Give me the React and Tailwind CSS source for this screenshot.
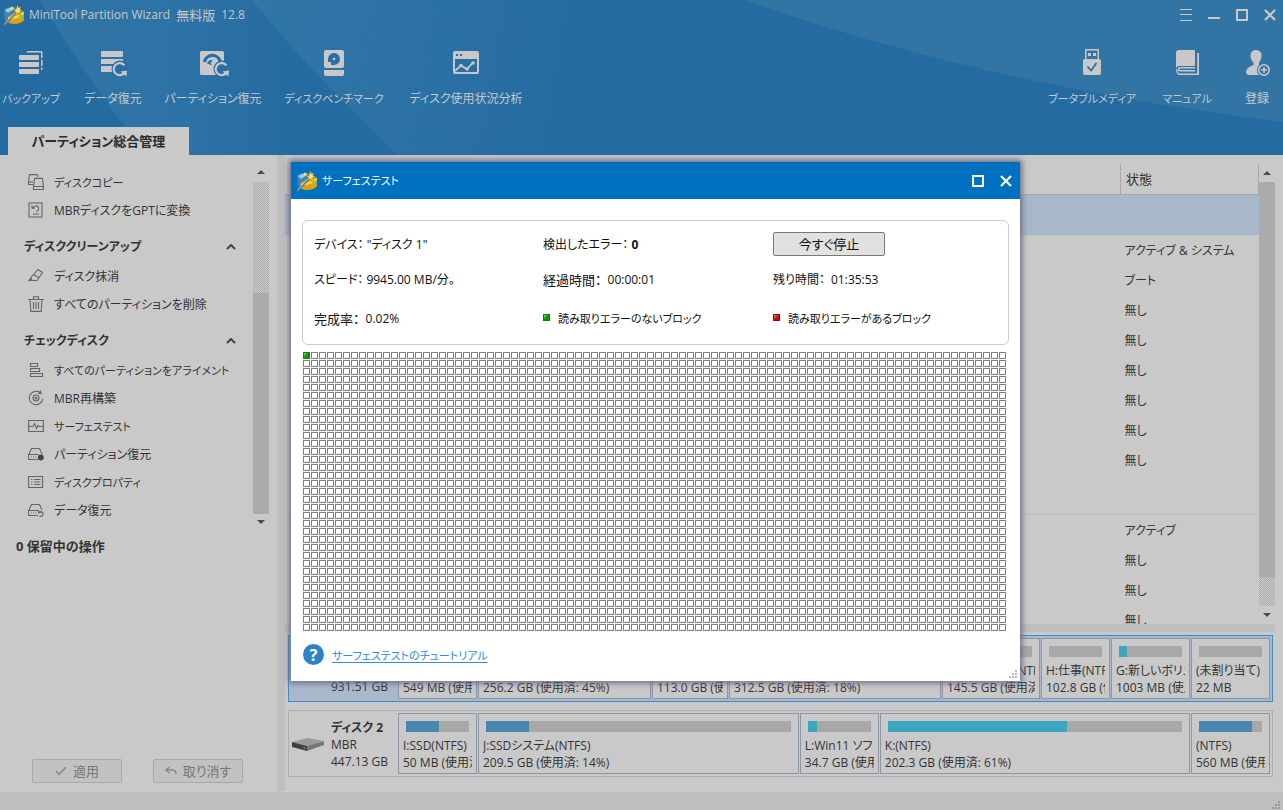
import clsx from 'clsx';

/* ---------- toolbar icons ---------- */

const ToolIcon = ({ className, children }) => (
  <svg width="30" height="30" viewBox="0 0 30 30" fill="#c8c8c8" className={clsx('overflow-visible', className)} aria-hidden="true">{children}</svg>
);

const Reload = () => (
  <>
    <circle cx="20" cy="20" r="8.5" fill="#2a6ea4"/>
    <path d="M24.4 16.4A6 6 0 1 0 24.4 23.8" fill="none" stroke="#c8c8c8" strokeWidth="2.2"/>
    <path d="M20.6 22.4l6.4-.8-.6 6z"/>
  </>
);

const BackupIcon = () => (
  <ToolIcon>
    <path d="M10.500 4.500Q10.500 3 12 3h13q1.500 0 1.500 1.500V10H25V4.500z"/>
    <path d="M25 11.500h1.500V18H25zM25 19.500h1.500V22H25z"/>
    <rect x="3" y="7" width="20" height="5" rx="1"/>
    <rect x="3" y="14" width="20" height="5"/>
    <rect x="3" y="21" width="20" height="5" rx="1"/>
  </ToolIcon>
);

const DataIcon = () => (
  <ToolIcon>
    <rect x="3" y="3" width="22" height="6" rx="1"/>
    <rect x="3" y="11" width="22" height="5"/>
    <rect x="3" y="18" width="15" height="6" rx="1"/>
    <g transform="translate(2 1)"><Reload/></g>
  </ToolIcon>
);

const PartitionIcon = () => (
  <ToolIcon>
    <rect x="2" y="3" width="24" height="24" rx="1.500"/>
    <path d="M6.500 14a8 8 0 0 1 15.500-1" fill="none" stroke="#2a6ea4" strokeWidth="3.200"/>
    <path d="M9 15.500a5 5 0 0 1 5-3.500l2 3-3 2z" fill="#2a6ea4"/>
    <circle cx="14.500" cy="15" r="1.800"/>
    <g transform="translate(4 1)"><Reload/></g>
  </ToolIcon>
);

const BenchIcon = () => (
  <ToolIcon>
    <rect x="5" y="2" width="20" height="18" rx="2"/>
    <path d="M5 22h20v4a2 2 0 0 1-2 2H7a2 2 0 0 1-2-2z"/>
    <path d="M9 11a6 6 0 1 1 5.500 6h-2.500v-3h-3z" fill="#2a6ea4"/>
    <circle cx="15" cy="11" r="1.300"/>
  </ToolIcon>
);

const UsageIcon = () => (
  <ToolIcon>
    <path fillRule="evenodd" d="M4 3h22a2 2 0 0 1 2 2v19a2 2 0 0 1-2 2H4a2 2 0 0 1-2-2V5a2 2 0 0 1 2-2zM4 11v13h22V11zM5 6v2h2V6zM9 6v2h2V6z"/>
    <path d="M4 23l6-5.500 6 3.500 6-6.500" fill="none" stroke="#c8c8c8" strokeWidth="1.800"/>
    <circle cx="10" cy="17.500" r="1.800"/>
    <circle cx="16" cy="21" r="1.800"/>
    <circle cx="22" cy="15" r="1.800"/>
  </ToolIcon>
);

const UsbIcon = () => (
  <ToolIcon>
    <path fillRule="evenodd" d="M8 1h14v10H8zM9.500 2.500V11h11V2.500z"/>
    <path d="M11 5h3v3h-3zM16 5h3v3h-3z"/>
    <rect x="6" y="11" width="18" height="16" rx="2"/>
    <path d="M10.500 18.500l3.500 4 5.500-7.500" fill="none" stroke="#2f72a6" strokeWidth="1.800"/>
  </ToolIcon>
);

const BookIcon = () => (
  <ToolIcon>
    <path d="M7 2h16v16H7.500a3 3 0 0 0-3.500 3V5a3 3 0 0 1 3-3z"/>
    <path d="M4 20.500C4 24 5 27 8 27h19V5h-1.800v20.500H8.500C6 25.500 5.500 24 5.500 22"/>
    <path fillRule="evenodd" d="M8 19h15v4.500H8a2.200 2.200 0 0 1 0-4.500zM8 20.500a.8.800 0 0 0 0 1.600h15v-1.600z"/>
  </ToolIcon>
);

const UserIcon = () => (
  <ToolIcon>
    <path d="M14 2c4 0 6 3 5.500 6.500-.3 3-1.500 5-2.500 6V17l7 4v6H8c-2.500 0-4-1-4-2.500C4 20 8 18.500 11.500 17v-2.500C10 13 8.500 11 8.500 8 8.500 4.500 10.500 2 14 2z"/>
    <circle cx="22" cy="22" r="7" fill="#2f72a6"/>
    <circle cx="22" cy="22" r="5.200" fill="none" stroke="#c8c8c8" strokeWidth="1.600"/>
    <path d="M19 21.200h6v1.600h-6zM21.200 19h1.600v6h-1.600z"/>
  </ToolIcon>
);

/* ---------- sidebar icons ---------- */

const SideIcon = ({ children }) => (
  <svg width="16" height="16" viewBox="0 0 16 16" fill="none" stroke="#666" strokeWidth="1.100" aria-hidden="true">{children}</svg>
);

const CopyIcon = () => (
  <SideIcon>
    <path d="M5 10.500H.6V7L1.500 1Q1.600.6 2 .6h7q.5 0 .6.500L10 3M.6 8H5"/>
    <path d="M5.500 12.500L6.500 5q0-.6.600-.6h6.800q.5 0 .6.600l.9 7.500v3H5.500zM5.500 12.500h9.900"/>
  </SideIcon>
);
const ConvertIcon = () => (
  <SideIcon>
    <rect x="1" y="1" width="13" height="14"/>
    <path d="M4.500 5.500h1.200a2.600 2.600 0 1 1 3.800 3.200L8.500 9.500M4 3.300v2.900h2.900M5 12h6"/>
  </SideIcon>
);
const EraseIcon = () => (
  <SideIcon><path d="M10 1.500l4.500 3-5.500 8H4L2.800 9.500zM5.500 6.500l5 3M3 10L1 12.500h8"/></SideIcon>
);
const TrashIcon = () => (
  <SideIcon><path d="M0 3.500h16M5.500 3V.8h5V3M2 3.500l.8 11.900h10.400L14 3.500M5.500 6v7M8 6v7M10.500 6v7"/></SideIcon>
);
const AlignIcon = () => (
  <SideIcon><path d="M2.500 1.500h7v3h-7zM2.500 6.500h9v3h-9zM2.500 11.500h12v3h-12z"/></SideIcon>
);
const RebuildIcon = () => (
  <SideIcon>
    <path d="M12.500 3A6.700 6.700 0 1 0 14.700 8.500M10 1l3 2.200L12.500.5M10 3.500h3.500"/>
    <circle cx="8" cy="8" r="3"/>
    <circle cx="8" cy="8" r="1"/>
  </SideIcon>
);
const SurfaceIcon = () => (
  <SideIcon><path d="M.6 2.500h14.800v11H.6zM1 8.500h4l1.500-3 2 5L10 7.500l1 1h4"/></SideIcon>
);
const DriveIcon = ({ children }) => (
  <SideIcon><path d="M.6 8.500L3.500 2.500h8L14 8M.6 8.500h10M.6 8.500v5H10M3 11h.8M5 11h.8M7 11h.8"/>{children}</SideIcon>
);
const PartRecIcon = () => (
  <DriveIcon><circle cx="12.800" cy="11.500" r="2.400" fill="#444" stroke="#444"/></DriveIcon>
);
const PropsIcon = () => (
  <SideIcon><path d="M.6 2.500h14v11H.6zM3 5.500h1.500M6 5.500h6.500M3 8h1.500M6 8h6.500M3 10.500h1.500M6 10.500h6.500"/></SideIcon>
);
const DataRecIcon = () => (
  <DriveIcon><path d="M11 10.500a2.300 2.300 0 1 1 .5 3.500M10.500 8.500v2.300h2.300"/></DriveIcon>
);

/* ---------- shared bits ---------- */

const AppLogo = () => (
  <svg width="22" height="22" viewBox="0 0 22 22" aria-hidden="true">
    <path d="M1 6Q5 2 13 3l-1 9-10 5z" fill="#3c86b4"/>
    <path d="M2 6Q6 3 12 4L5 9z" fill="#a7cbe0"/>
    <path d="M5 13q6-5 15.500-5.500L21 16q-3 4-10 4-5-.5-6.500-2z" fill="#d9a414"/>
    <path d="M5 13q6 1 15.500-5.500l.5 3Q14 16 5 15z" fill="#f2d24c"/>
    <path d="M1 21.500L13.500 8" stroke="#6f747a" strokeWidth="2"/>
    <path d="M2 19.500L13 7.500" stroke="#d5d9dd" strokeWidth=".8"/>
    <path d="M14.500 1l1 2.500 2.500-.5-1 2.500 2.500 1.500-2.700.8.200 2.700-2.500-1.500-2 1.500.3-2.700L10.500 6l2.500-.8z" fill="#f3e06a" stroke="#96752a" strokeWidth=".6"/>
    <path d="M17.500 9.500l1 1.500 2-.3-1 1.800 1 1.500-2-.2-1.200 1.500-.5-2-1.800-.8 1.700-1z" fill="#9fbf3a"/>
    <path d="M8.500 2l.8 1.300 1.500-.2-.8 1.300.6 1.300-1.500-.3-1.100 1-.1-1.500-1.300-.8 1.500-.6z" fill="#f3e06a"/>
  </svg>
);

const MaxGlyph = () => <svg width="12" height="12" viewBox="0 0 12 12"><path d="M1 1h10v10H1z" fill="none" stroke="currentColor" strokeWidth="2"/></svg>;
const CloseGlyph = () => <svg width="12" height="12" viewBox="0 0 12 12"><path d="M1 1l10 10M11 1L1 11" stroke="currentColor" strokeWidth="2.200"/></svg>;
const Arrow = ({ down }) => (
  <svg width="8" height="4" viewBox="0 0 8 4"><path d={down ? 'M0 0h8L4 4z' : 'M0 4h8L4 0z'} fill="#4a4a4a"/></svg>
);

const Dither = ({ className }) => (
  <div className={clsx('bg-[repeating-conic-gradient(#adadad_0_25%,#c9c9c9_0_50%)] bg-[length:2px_2px]', className)}/>
);

const isKana = s => /^[\u3040-\u30ff]+$/.test(s);
const labelSize = s => (isKana(s) ? 'text-[11px]' : 'text-[12px]');

/* ---------- data ---------- */

const leftTools = [
  { label: 'バックアップ', Icon: BackupIcon, w: 'w-[58px]' },
  { label: 'データ復元', Icon: DataIcon, w: 'w-[58px]' },
  { label: 'パーティション復元', Icon: PartitionIcon, w: 'w-[94px]' },
  { label: 'ディスクベンチマーク', Icon: BenchIcon, w: 'w-[100px]' },
  { label: 'ディスク使用状況分析', Icon: UsageIcon, w: 'w-[116px]' },
];

const rightTools = [
  { label: 'ブータブルメディア', Icon: UsbIcon, w: 'w-[90px]' },
  { label: 'マニュアル', Icon: BookIcon, w: 'w-[52px]' },
  { label: '登録', Icon: UserIcon, w: 'w-[40px]' },
];

const menu = [
  { items: [['ディスクコピー', CopyIcon], ['MBRディスクをGPTに変換', ConvertIcon]] },
  { title: 'ディスククリーンアップ', items: [['ディスク抹消', EraseIcon], ['すべてのパーティションを削除', TrashIcon]] },
  {
    title: 'チェックディスク',
    items: [
      ['すべてのパーティションをアライメント', AlignIcon],
      ['MBR再構築', RebuildIcon],
      ['サーフェステスト', SurfaceIcon],
      ['パーティション復元', PartRecIcon],
      ['ディスクプロパティ', PropsIcon],
      ['データ復元', DataRecIcon],
    ],
  },
];

const disk1 = ['アクティブ & システム', 'ブート', '無し', '無し', '無し', '無し', '無し', '無し'];
const disk2 = ['アクティブ', '無し', '無し', '無し'];

const disks = [
  {
    size: '931.51 GB', selected: true,
    parts: [
      { info: '549 MB (使用済', w: 'w-[79px]' },
      { info: '256.2 GB (使用済: 45%)', used: 45, w: 'w-[173px]' },
      { info: '113.0 GB (使用', w: 'w-[76px]' },
      { info: '312.5 GB (使用済: 18%)', used: 18, w: 'flex-1' },
      { name: 'F:データ保存(NTFS)', info: '145.5 GB (使用済', w: 'w-[98px]' },
      { name: 'H:仕事(NTFS)', info: '102.8 GB (使', w: 'w-[69px]' },
      { name: 'G:新しいボリューム', info: '1003 MB (使用', used: 13, w: 'w-[79px]', color: 'bg-[#3ba6bd]' },
      { name: '(未割り当て)', info: '22 MB', w: 'w-[79px]' },
    ],
  },
  {
    name: 'ディスク 2', type: 'MBR', size: '447.13 GB',
    parts: [
      { name: 'I:SSD(NTFS)', info: '50 MB (使用済', used: 53, w: 'w-[79px]' },
      { name: 'J:SSDシステム(NTFS)', info: '209.5 GB (使用済: 14%)', used: 14, w: 'flex-[321]' },
      { name: 'L:Win11 ソフト', info: '34.7 GB (使用', used: 14, w: 'w-[79px]', color: 'bg-[#3ba6bd]' },
      { name: 'K:(NTFS)', info: '202.3 GB (使用済: 61%)', used: 61, w: 'flex-[310]', color: 'bg-[#3ba6bd]' },
      { name: '(NTFS)', info: '560 MB (使用', used: 84, w: 'w-[79px]' },
    ],
  },
];

const BLOCKS = 88 * 35;

/* ---------- sections ---------- */

function Tool({ label, Icon, w }) {
  return (
    <button type="button" className={clsx('flex shrink-0 flex-col items-center whitespace-nowrap', w)}>
      <Icon/>
      <span className={clsx('mt-[11px] leading-5', labelSize(label))}>{label}</span>
    </button>
  );
}

function Header() {
  return (
    <header className="relative flex h-[155px] shrink-0 flex-col text-[#c8c8c8]">
      <svg className="absolute inset-0 h-full w-full" viewBox="0 0 1283 155" preserveAspectRatio="none" aria-hidden="true">
        <defs>
          <linearGradient id="a" x1="45" x2="300" y1="0" y2="0" gradientUnits="userSpaceOnUse">
            <stop offset="0" stopColor="#3175a6"/><stop offset=".55" stopColor="#2d72a5"/><stop offset="1" stopColor="#246ba2"/>
          </linearGradient>
          <linearGradient id="b" x1="250" x2="600" y1="0" y2="60" gradientUnits="userSpaceOnUse">
            <stop offset="0" stopColor="#3076a6"/><stop offset=".4" stopColor="#2c72a5"/><stop offset="1" stopColor="#246ba2"/>
          </linearGradient>
        </defs>
        <path d="M0 0h1283v155H0z" fill="#246ba2"/>
        <path d="M40 0Q84 76 147 155H400L252 0z" fill="url(#a)"/>
        <path d="M252 0Q310 72 398 155H640V0z" fill="url(#b)"/>
        <path d="M745 0Q980 84 1283 122V0z" fill="#3275a5"/>
      </svg>

      <div className="relative flex h-[30px] items-center pl-[3px] pr-[7px]">
        <AppLogo/>
        <h1 className="ml-1 flex gap-1.5">MiniTool Partition Wizard <span className="text-[13px]">無料版</span> <span>12.8</span></h1>
        <div className="ml-auto flex items-center gap-4">
          <button type="button" aria-label="メニュー"><svg width="12" height="12" viewBox="0 0 12 12"><path d="M0 .5h12M0 5.500h12M0 11.500h12" stroke="currentColor"/></svg></button>
          <button type="button" aria-label="最小化"><svg width="12" height="12" viewBox="0 0 12 12"><path d="M0 9h12" stroke="currentColor" strokeWidth="2"/></svg></button>
          <button type="button" aria-label="最大化"><MaxGlyph/></button>
          <button type="button" aria-label="閉じる"><CloseGlyph/></button>
        </div>
      </div>

      <nav className="relative flex flex-1 items-start justify-between pl-0.5 pr-[6px] pt-[18px]">
        <div className="flex gap-6">{leftTools.map(t=><Tool key={t.label} {...t}/>)}</div>
        <div className="flex gap-6">{rightTools.map(t=><Tool key={t.label} {...t}/>)}</div>
      </nav>

      <button type="button" className="relative ml-2 h-7 w-[181px] bg-[#c9c9c9] text-[13px] font-bold text-[#2b2b2b]">パーティション総合管理</button>
    </header>
  );
}

function Sidebar() {
  return (
    <aside className="flex w-[277px] shrink-0 flex-col">
      <div className="flex pt-[13px]">
        <div className="flex-1">
          {menu.map((group,i)=>(
            <section key={i}>
              {group.title && (
                <h2 className="flex h-[38px] items-center justify-between pl-6 pr-[17px] pt-2 font-bold">
                  {group.title}
                  <svg width="10" height="6" viewBox="0 0 10 6"><path d="M1 5l4-4 4 4" fill="none" stroke="#444" strokeWidth="2"/></svg>
                </h2>
              )}
              {group.items.map(([label,Icon])=>(
                <button key={label} type="button" className={clsx('flex h-7 w-full items-center gap-[10px] whitespace-nowrap pl-7', labelSize(label))}>
                  <Icon/><span className="pt-0.5">{label}</span>
                </button>
              ))}
            </section>
          ))}
        </div>
        <div className="mr-2 flex w-4 flex-col items-center">
          <div className="flex h-[14px] items-start pt-0.5"><Arrow/></div>
          <Dither className="h-[111px] w-full"/>
          <div className="w-full flex-1 bg-[#ababab]"/>
          <div className="flex h-[10px] items-end"><Arrow down/></div>
        </div>
      </div>
      <div className="mt-3 pl-4 text-[13px] font-bold leading-5">0 保留中の操作</div>
      <div className="mb-[9px] mt-auto flex gap-[31px] pl-8 text-[13px] text-[#777]">
        <button type="button" disabled className="flex h-6 w-[90px] items-center justify-center gap-1.5 rounded-xs border border-[#a9a9a9] bg-[#c2c2c2]">
          <svg width="12" height="10" viewBox="0 0 12 10"><path d="M1 5l3 3.500L11 1" fill="none" stroke="#8a8a8a" strokeWidth="1.600"/></svg>
          適用
        </button>
        <button type="button" disabled className="flex h-6 w-[90px] items-center justify-center gap-1.5 rounded-xs border border-[#a9a9a9] bg-[#c2c2c2]">
          <svg width="12" height="10" viewBox="0 0 12 10"><path d="M4.500 1L1 4l3.500 3M1 4h6.500Q11 4 11 8" fill="none" stroke="#8a8a8a" strokeWidth="1.600"/></svg>
          取り消す
        </button>
      </div>
    </aside>
  );
}

const StateRow = ({ state }) => (
  <tr className="h-[30px]"><td/><td className="pl-1 pt-1">{state}</td></tr>
);

function PartitionTable() {
  return (
    <div className="flex min-h-0 flex-1 pr-2 pt-[9px]">
      <div className="flex-1 overflow-hidden">
        <table className="w-full table-fixed border-collapse text-left">
          <colgroup><col/><col className="w-[138px]"/></colgroup>
          <thead>
            <tr className="h-[30px] border-b border-[#a9a9a9]">
              <th/>
              <th className="border-x border-[#a9a9a9] pl-[5px] text-[13px] font-normal">状態</th>
            </tr>
          </thead>
          <tbody>
            <tr className="h-10 border-b border-[#9fb3c8] bg-[#a7b8c9]"><td colSpan={2}/></tr>
            {disk1.map((s,i)=><StateRow key={i} state={s}/>)}
            <tr className="h-10 border-b border-[#bdbdbd]"><td colSpan={2}/></tr>
            {disk2.map((s,i)=><StateRow key={i} state={s}/>)}
          </tbody>
        </table>
      </div>
      <div className="flex w-4 flex-col items-center">
        <div className="flex h-[18px] items-center"><Arrow/></div>
        <div className="w-full flex-1 bg-[#ababab]"/>
        <Dither className="h-[29px] w-full"/>
        <div className="flex h-[18px] items-center"><Arrow down/></div>
      </div>
    </div>
  );
}

function DiskRow({ disk }) {
  return (
    <div className={clsx('flex h-[67px] border py-0.5 pr-0.5', disk.selected ? 'border-[#3f8acb] bg-[#a9b9cb]' : 'border-[#a9adb8]')}>
      <div className="flex w-[109px] shrink-0 items-center gap-[7px] pl-[3px]">
        <svg width="32" height="14" viewBox="0 0 32 14" aria-hidden="true">
          <path d="M0 5L16 1l16 3-17 5z" fill="#9b9b9b"/>
          <path d="M0 5l15 4v5L0 10z" fill="#3d4240"/>
          <path d="M15 9l17-5v4l-17 6z" fill="#767676"/>
          <circle cx="12.500" cy="11" r="1.100" fill="#3fae3a"/>
        </svg>
        <div className="whitespace-nowrap pt-0.5 leading-[17px]">
          <div className="h-[17px] font-bold">{disk.name}</div>
          <div className="h-[17px]">{disk.type}</div>
          <div>{disk.size}</div>
        </div>
      </div>
      <div className="flex min-w-0 flex-1 gap-px">
        {disk.parts.map(p=>(
          <div key={p.info} className={clsx('min-w-0 overflow-hidden border border-[#8b97a5] bg-[#c9c9c9] px-1 pt-[7px]', p.w)}>
            <div className="mx-[3px] h-[11px] bg-[#a8a8a8]">
              <div className={clsx('h-full', p.color || 'bg-[#4a87ae]')} style={{ width: `${p.used || 0}%` }}/>
            </div>
            <div className="mt-[5px] overflow-hidden whitespace-nowrap leading-[17px]">
              <div className="h-[17px]">{p.name}</div>
              <div>{p.info}</div>
            </div>
          </div>
        ))}
      </div>
    </div>
  );
}

const Grip = ({ className }) => (
  <svg width="9" height="9" viewBox="0 0 9 9" className={className} fill="currentColor" aria-hidden="true">
    <path d="M6 0h2v2H6zM3 3h2v2H3zM6 3h2v2H6zM0 6h2v2H0zM3 6h2v2H3zM6 6h2v2H6z"/>
  </svg>
);

function SurfaceTestDialog() {
  return (
    <div role="dialog" aria-labelledby="dlg-title" className="absolute left-[291px] top-[162px] h-[519px] w-[729px] bg-white text-[#111] shadow-[0_0_6px_2px_#6a6785]">
      <div className="flex h-[37px] items-center bg-[#0071c1] pl-[5px] pr-2 text-white">
        <AppLogo/>
        <h2 id="dlg-title" className="ml-1 text-[11px]">サーフェステスト</h2>
        <div className="ml-auto flex items-center gap-4">
          <button type="button" aria-label="最大化"><MaxGlyph/></button>
          <button type="button" aria-label="閉じる"><CloseGlyph/></button>
        </div>
      </div>

      <div className="px-[11px] pt-[21px]">
        <div className="grid grid-cols-[229px_230px_1fr] grid-rows-[46px_24px_53px] items-center rounded-md border border-[#ccc] pl-[11px]">
          <div className="pt-0.5">デバイス： "ディスク 1"</div>
          <div className="pt-0.5">検出したエラー： <b>0</b></div>
          <div><button type="button" className="h-6 w-[112px] rounded-xs border border-[#777] bg-[#e1e1e1] text-[13px]">今すぐ停止</button></div>
          <div className="pt-0.5">スピード： 9945.00 MB/分。</div>
          <div className="flex gap-1.5 pt-0.5"><span className="text-[13px]">経過時間：</span>00:00:01</div>
          <div className="flex gap-1.5 pt-0.5"><span>残り時間：</span>01:35:53</div>
          <div className="flex gap-1.5 pt-0.5"><span className="text-[13px]">完成率：</span>0.02%</div>
          <div className="flex items-center gap-2 text-[11px]"><span className="h-[7px] w-[7px] border border-[#0b7a10] bg-[linear-gradient(135deg,#8be07a,#149014_50%)]"/><span className="pt-0.5">読み取りエラーのないブロック</span></div>
          <div className="flex items-center gap-2 text-[11px]"><span className="h-[7px] w-[7px] border border-[#8a0d08] bg-[linear-gradient(135deg,#f59a8a,#c41208_50%)]"/><span className="pt-0.5">読み取りエラーがあるブロック</span></div>
        </div>

        {/* Block map */}
        <div className="ml-px mt-[7px] grid grid-cols-[repeat(88,7px)] gap-px">
          {Array.from({length:BLOCKS}).map((_,i)=>(
            <i key={i} className={clsx('h-[7px] border', i===0 ? 'border-[#0b8a10] bg-[linear-gradient(135deg,#8be07a,#149014_50%)]' : 'border-[#808080]')}/>
          ))}
        </div>

        <div className="ml-px mt-[13px] flex items-center gap-2">
          <span className="flex h-[21px] w-[21px] items-center justify-center rounded-full bg-[#2d83c7] text-[16px] font-bold text-white">?</span>
          <a href="#tutorial" className="pt-0.5 text-[11px] text-[#2f8be0] underline underline-offset-2">サーフェステストのチュートリアル</a>
        </div>
      </div>

      <Grip className="absolute bottom-0.5 right-0.5 text-[#bbb]"/>
    </div>
  );
}

export default function App() {
  return (
    <div className="relative flex h-screen min-h-[640px] flex-col overflow-hidden bg-[#c9c9c9] font-['Open_Sans','Noto_Sans_CJK_JP',sans-serif] text-[12px] leading-4 text-[#333] [font-feature-settings:'palt']">
      <Header/>
      <div className="flex min-h-0 flex-1">
        <Sidebar/>
        <div className="mb-px w-2 shrink-0 bg-[#bebebe]"/>
        <main className="flex min-w-0 flex-1 flex-col">
          <PartitionTable/>
          <div className="mr-2 h-2 shrink-0 bg-[#bebebe]"/>
          <div className="flex shrink-0 flex-col gap-2 pb-[15px] pl-[3px] pr-[10px] pt-[3px]">
            {disks.map(d=><DiskRow key={d.size} disk={d}/>)}
          </div>
        </main>
      </div>
      <footer className="flex h-[18px] shrink-0 items-end justify-end bg-[#bfbfbf] pr-0.5 text-[#999]"><Grip/></footer>
      <SurfaceTestDialog/>
    </div>
  );
}
